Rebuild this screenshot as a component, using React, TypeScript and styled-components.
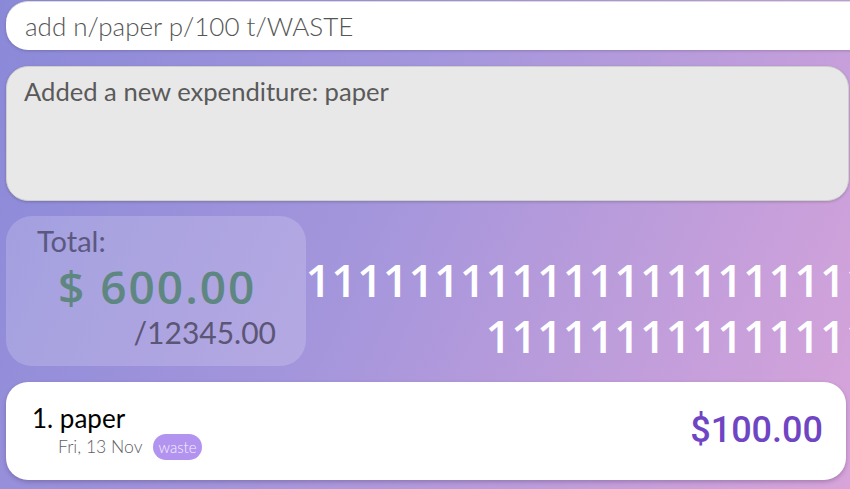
import React from "react";
import styled, { createGlobalStyle } from "styled-components";

const Global = createGlobalStyle`
  html, body { margin: 0; padding: 0; }
  body {
    width: 850px;
    height: 489px;
    overflow: hidden;
    background: linear-gradient(115deg, #8a89d8 0%, #a596dc 45%, #d8a4da 100%);
    font-family: Lato, "Liberation Sans", sans-serif;
  }
`;

const Page = styled.div`
  width: 850px;
  height: 489px;
  box-sizing: border-box;
  padding: 1px 0 0 6px;
  display: flex;
  flex-direction: column;
  overflow: hidden;
`;

const CommandBox = styled.div`
  height: 49px;
  width: 870px;
  box-sizing: border-box;
  background: #ffffff;
  border-radius: 22px;
  border-top: 1px solid #dcdcdc;
  box-shadow: 0 1px 3px rgba(0, 0, 0, 0.18);
  display: flex;
  align-items: center;
  padding-left: 19px;
  font-family: Lato, sans-serif;
  font-weight: 300;
  font-size: 26px;
  color: #555555;
`;

const ResultBox = styled.div`
  margin-top: 16px;
  height: 135px;
  width: 843px;
  box-sizing: border-box;
  background: #e8e8e8;
  border: 1px solid #cfcfcf;
  border-radius: 22px;
  box-shadow: 0 1px 3px rgba(0, 0, 0, 0.2);
  padding: 9px 17px;
  font-family: Lato, sans-serif;
  font-size: 25.6px;
  color: #5a5a5a;
`;

const MiddleRow = styled.div`
  margin-top: 15px;
  height: 150px;
  display: flex;
`;

const TotalCard = styled.div`
  width: 300px;
  flex-shrink: 0;
  box-sizing: border-box;
  border-radius: 26px;
  background: rgba(255, 255, 255, 0.18);
  padding: 8px 30px 0 31px;
  display: flex;
  flex-direction: column;
`;

const TotalLabel = styled.div`
  font-family: Lato, sans-serif;
  font-size: 29px;
  color: #5b5980;
  line-height: 34px;
`;

const TotalAmount = styled.div`
  font-family: "Open Sans", sans-serif;
  font-weight: 600;
  font-size: 46px;
  letter-spacing: 2px;
  color: #5f8782;
  line-height: 56px;
  margin-left: 21px;
`;

const Budget = styled.div`
  font-family: Lato, sans-serif;
  font-size: 30px;
  color: #5b5676;
  text-align: right;
  line-height: 36px;
`;

const DigitsArea = styled.div`
  flex: 1;
  min-width: 0;
  overflow: hidden;
  padding-top: 36px;
`;

const Digits = styled.div`
  width: 620px;
  margin-left: -3px;
  font-family: "Open Sans", sans-serif;
  font-weight: 600;
  font-size: 45px;
  line-height: 56px;
  color: #ffffff;
  text-align: right;
  word-break: break-all;
`;

const ExpenseCard = styled.div`
  margin-top: 16px;
  height: 98px;
  width: 840px;
  box-sizing: border-box;
  background: #ffffff;
  border-radius: 22px;
  box-shadow: 0 2px 4px rgba(60, 40, 90, 0.3);
  display: flex;
  align-items: center;
  justify-content: space-between;
  padding: 0 23px 0 26px;
`;

const ExpenseInfo = styled.div`
  display: flex;
  flex-direction: column;
`;

const ExpenseTitle = styled.div`
  font-family: Lato, sans-serif;
  font-size: 26px;
  color: #000000;
  line-height: 30px;
`;

const MetaRow = styled.div`
  display: flex;
  align-items: center;
  gap: 10px;
  padding-left: 26px;
  margin-top: 1px;
`;

const DateText = styled.span`
  font-family: Lato, sans-serif;
  font-weight: 300;
  font-size: 17.6px;
  color: #5f6068;
`;

const Tag = styled.span`
  background: #b293f0;
  border-radius: 13px;
  padding: 0 6px;
  height: 26px;
  display: inline-flex;
  align-items: center;
  font-family: Lato, sans-serif;
  font-weight: 300;
  font-size: 15px;
  color: #f6f0ff;
`;

const Price = styled.div`
  font-family: Roboto, sans-serif;
  font-weight: 500;
  font-size: 36px;
  color: #6f45c4;
  margin-top: -2px;
`;

export default function App() {
  const ones = "1".repeat(41);
  return (
    <>
      <Global />
      <Page>
        <CommandBox>add n/paper p/100 t/WASTE</CommandBox>
        <ResultBox>Added a new expenditure: paper</ResultBox>
        <MiddleRow>
          <TotalCard>
            <TotalLabel>Total:</TotalLabel>
            <TotalAmount>$ 600.00</TotalAmount>
            <Budget>/12345.00</Budget>
          </TotalCard>
          <DigitsArea>
            <Digits>{ones}</Digits>
          </DigitsArea>
        </MiddleRow>
        <ExpenseCard>
          <ExpenseInfo>
            <ExpenseTitle>1. paper</ExpenseTitle>
            <MetaRow>
              <DateText>Fri, 13 Nov</DateText>
              <Tag>waste</Tag>
            </MetaRow>
          </ExpenseInfo>
          <Price>$100.00</Price>
        </ExpenseCard>
      </Page>
    </>
  );
}
